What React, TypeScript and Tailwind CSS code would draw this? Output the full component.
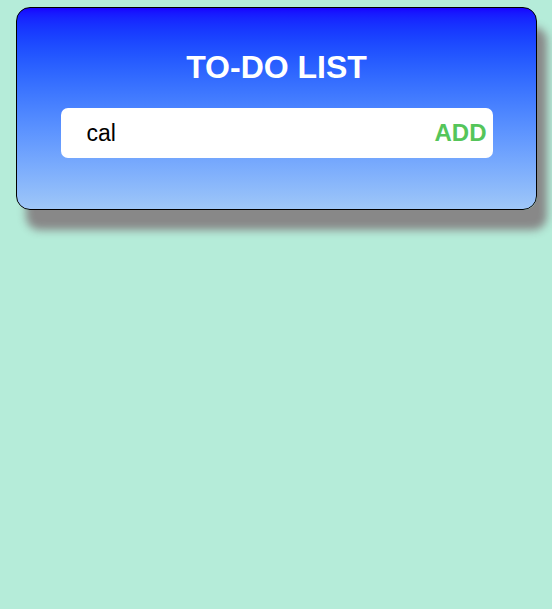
import { useState } from "react";

export default function App() {
  const [task, setTask] = useState("cal");

  return (
    <div className="min-h-screen bg-[#b5ecd9] pt-[7px] font-['Liberation_Sans',Arial,sans-serif]">
      <div className="ml-[16px] mr-[15px] h-[203px] rounded-[14px] border border-black bg-linear-to-b from-[#1800ff] to-[#9fc7f8] shadow-[10px_20px_9px_#888]">
        <h1 className="pt-[41px] text-center text-[32px] font-bold leading-[37px] text-white">
          TO-DO LIST
        </h1>
        <div className="mx-auto mt-[22px] flex h-[50px] w-[432px] items-center rounded-[7px] bg-white pl-[26px] pr-[6px]">
          <input
            autoFocus
            value={task}
            onChange={(e) => setTask(e.target.value)}
            className="min-w-0 flex-1 bg-transparent text-[23px] text-black outline-none"
          />
          <button className="text-[24px] font-bold text-[#55c55a]">ADD</button>
        </div>
      </div>
    </div>
  );
}
